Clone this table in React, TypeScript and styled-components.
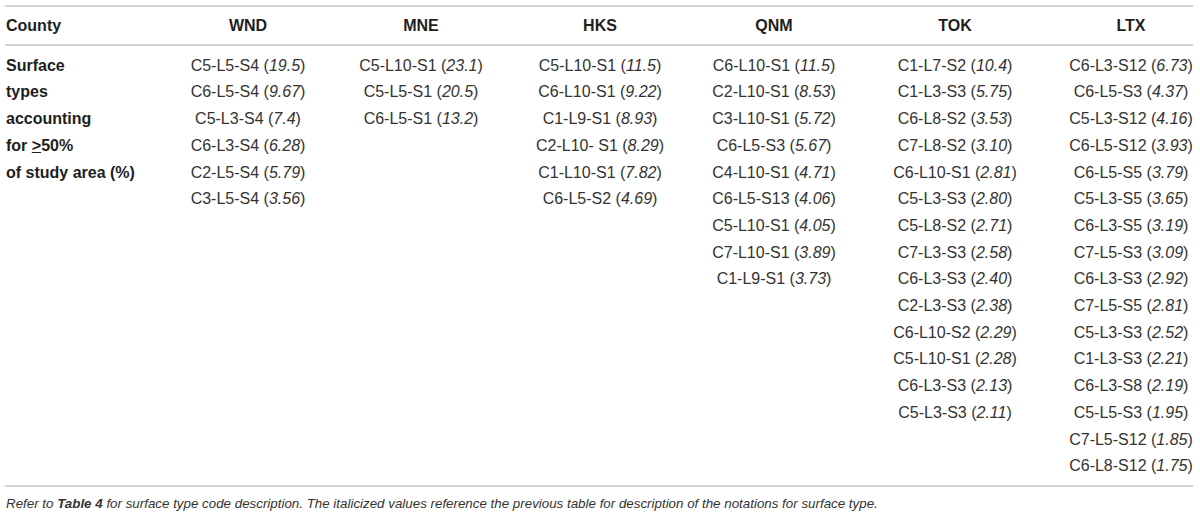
import styled, { createGlobalStyle } from "styled-components";

const GlobalStyle = createGlobalStyle`
  html, body {
    margin: 0;
    padding: 0;
    background: #ffffff;
  }
  body {
    font-family: "Liberation Sans", Arial, sans-serif;
    color: #333333;
  }
`;

const Page = styled.div`
  width: 1188px;
  padding: 5px 7px 0 5px;
`;

const Grid = styled.div<{ $header?: boolean }>`
  display: grid;
  grid-template-columns: 142px 182px 164px 194px 154px 208px 144px;
  border-top: ${(p) => (p.$header ? "2px solid #d2d2d2" : "none")};
  border-bottom: 2px solid #d2d2d2;
  padding: ${(p) => (p.$header ? "6px 0 4px" : "7px 0 5px")};
  font-size: 16px;
  line-height: 26.7px;
`;

const HeadCell = styled.div<{ $first?: boolean }>`
  font-weight: bold;
  color: #1e1e1e;
  text-align: ${(p) => (p.$first ? "left" : "center")};
  padding-left: ${(p) => (p.$first ? "1px" : "20px")};
  white-space: nowrap;
`;

const LabelCell = styled.div`
  font-weight: bold;
  color: #1e1e1e;
  padding-left: 1px;
`;

const DataCell = styled.div`
  display: flex;
  flex-direction: column;
  align-items: center;
  padding-left: 20px;
  white-space: nowrap;
`;

const Value = styled.span`
  font-style: italic;
`;

const Note = styled.p`
  margin: 8px 0 0;
  font-size: 13.35px;
  line-height: 17px;
  font-style: italic;
  color: #333333;
  padding-left: 1px;
`;

type Entry = [string, string];

const columns: { county: string; items: Entry[] }[] = [
  {
    county: "WND",
    items: [
      ["C5-L5-S4", "19.5"],
      ["C6-L5-S4", "9.67"],
      ["C5-L3-S4", "7.4"],
      ["C6-L3-S4", "6.28"],
      ["C2-L5-S4", "5.79"],
      ["C3-L5-S4", "3.56"],
    ],
  },
  {
    county: "MNE",
    items: [
      ["C5-L10-S1", "23.1"],
      ["C5-L5-S1", "20.5"],
      ["C6-L5-S1", "13.2"],
    ],
  },
  {
    county: "HKS",
    items: [
      ["C5-L10-S1", "11.5"],
      ["C6-L10-S1", "9.22"],
      ["C1-L9-S1", "8.93"],
      ["C2-L10- S1", "8.29"],
      ["C1-L10-S1", "7.82"],
      ["C6-L5-S2", "4.69"],
    ],
  },
  {
    county: "QNM",
    items: [
      ["C6-L10-S1", "11.5"],
      ["C2-L10-S1", "8.53"],
      ["C3-L10-S1", "5.72"],
      ["C6-L5-S3", "5.67"],
      ["C4-L10-S1", "4.71"],
      ["C6-L5-S13", "4.06"],
      ["C5-L10-S1", "4.05"],
      ["C7-L10-S1", "3.89"],
      ["C1-L9-S1", "3.73"],
    ],
  },
  {
    county: "TOK",
    items: [
      ["C1-L7-S2", "10.4"],
      ["C1-L3-S3", "5.75"],
      ["C6-L8-S2", "3.53"],
      ["C7-L8-S2", "3.10"],
      ["C6-L10-S1", "2.81"],
      ["C5-L3-S3", "2.80"],
      ["C5-L8-S2", "2.71"],
      ["C7-L3-S3", "2.58"],
      ["C6-L3-S3", "2.40"],
      ["C2-L3-S3", "2.38"],
      ["C6-L10-S2", "2.29"],
      ["C5-L10-S1", "2.28"],
      ["C6-L3-S3", "2.13"],
      ["C5-L3-S3", "2.11"],
    ],
  },
  {
    county: "LTX",
    items: [
      ["C6-L3-S12", "6.73"],
      ["C6-L5-S3", "4.37"],
      ["C5-L3-S12", "4.16"],
      ["C6-L5-S12", "3.93"],
      ["C6-L5-S5", "3.79"],
      ["C5-L3-S5", "3.65"],
      ["C6-L3-S5", "3.19"],
      ["C7-L5-S3", "3.09"],
      ["C6-L3-S3", "2.92"],
      ["C7-L5-S5", "2.81"],
      ["C5-L3-S3", "2.52"],
      ["C1-L3-S3", "2.21"],
      ["C6-L3-S8", "2.19"],
      ["C5-L5-S3", "1.95"],
      ["C7-L5-S12", "1.85"],
      ["C6-L8-S12", "1.75"],
    ],
  },
];

export default function App() {
  return (
    <>
      <GlobalStyle />
      <Page>
        <Grid $header>
          <HeadCell $first>County</HeadCell>
          {columns.map((c) => (
            <HeadCell key={c.county}>{c.county}</HeadCell>
          ))}
        </Grid>
        <Grid>
          <LabelCell>
            Surface
            <br />
            types
            <br />
            accounting
            <br />
            for <u>&gt;</u>50%
            <br />
            of study area (%)
          </LabelCell>
          {columns.map((c) => (
            <DataCell key={c.county}>
              {c.items.map(([code, val], i) => (
                <div key={i}>
                  {code} (<Value>{val}</Value>)
                </div>
              ))}
            </DataCell>
          ))}
        </Grid>
        <Note>
          Refer to <b>Table 4</b> for surface type code description. The
          italicized values reference the previous table for description of
          the notations for surface type.
        </Note>
      </Page>
    </>
  );
}
